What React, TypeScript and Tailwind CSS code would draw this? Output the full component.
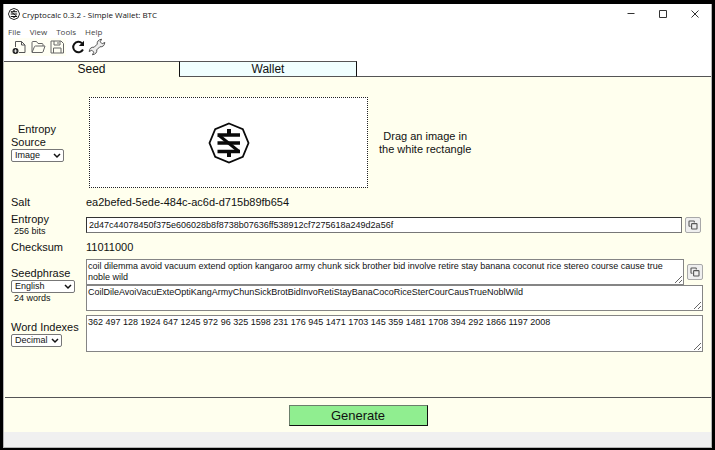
import React, { useState } from "react";

const SEED =
  "coil dilemma avoid vacuum extend option kangaroo army chunk sick brother bid involve retire stay banana coconut rice stereo course cause true noble wild";
const SHORT_SEED =
  "CoilDileAvoiVacuExteOptiKangArmyChunSickBrotBidInvoRetiStayBanaCocoRiceSterCourCausTrueNoblWild";
const INDEXES =
  "362 497 128 1924 647 1245 972 96 325 1598 231 176 945 1471 1703 145 359 1481 1708 394 292 1866 1197 2008";

function Logo({ className, ring }: { className: string; ring: number }) {
  return (
    <svg viewBox="0 0 42 42" className={className} fill="none" stroke="#0a0a0a" aria-hidden="true">
      <path d="M21 1.5 34.8 7.2 40.5 21 34.8 34.8 21 40.5 7.2 34.8 1.5 21 7.2 7.2Z" strokeWidth={ring} />
      <path d="M21 7v7M21 28v7" strokeWidth="4" />
      <path d="M9.5 13h22.5M9.5 21h22.5M9.5 29.5h22.5" strokeWidth="3.6" />
      <path d="M10.500 13 31 29.5" strokeWidth="3" />
    </svg>
  );
}

function CopyButton({ label }: { label: string }) {
  return (
    <button
      type="button"
      aria-label={label}
      className="grid size-4 shrink-0 place-items-center rounded-[2px] border border-[#a8a8a8] bg-[#efefef]"
    >
      <svg viewBox="0 0 10 10" className="size-[10px]" fill="none" stroke="#555" strokeWidth="1.1" aria-hidden="true">
        <path d="M2.5 6.3H1.6a.6.6 0 0 1-.6-.6V1.6A.6.6 0 0 1 1.6 1h4.1a.6.6 0 0 1 .6.6v1" />
        <rect x="3.6" y="3.6" width="5.4" height="5.4" rx="0.6" />
      </svg>
    </button>
  );
}

function Picker({ id, options, width }: { id: string; options: string[]; width: string }) {
  return (
    <div className={`relative ${width}`}>
      <select
        id={id}
        className="block h-[13px] w-full appearance-none rounded-[2px] border border-[#777] bg-white pl-[3px] text-[9px] leading-[11px] text-[#111]"
      >
        {options.map((o) => (
          <option key={o}>{o}</option>
        ))}
      </select>
      <svg
        viewBox="0 0 8 6"
        className="pointer-events-none absolute top-1 right-[3px] h-[6px] w-2"
        fill="none"
        stroke="#111"
        strokeWidth="1.5"
        aria-hidden="true"
      >
        <path d="M1 1l3 3 3-3" />
      </svg>
    </div>
  );
}

function Row({ label, children }: { label: React.ReactNode; children: React.ReactNode }) {
  return (
    <div className="flex items-center">
      <div className="w-[75px] shrink-0 whitespace-nowrap">{label}</div>
      <div className="min-w-0 flex-1">{children}</div>
    </div>
  );
}

const area =
  "block resize overflow-hidden border border-[#858585] bg-white px-[1px] py-[1px] text-[9px] leading-[11px] text-[#111]";

function Toolbar() {
  const btn = "grid h-[18px] w-[19px] place-items-center";
  return (
    <div className="flex h-[23px] items-start pl-[5px]">
      <button type="button" aria-label="New" className={`${btn} bg-[#fffff4]`}>
        <svg viewBox="0 0 16 16" className="size-4" fill="none" stroke="#555">
          <path d="M4.500 8V2.500h6M10.500 2.500v3.500H14v7.500H8M10.500 2.500l3.500 3.500" />
          <circle cx="4.500" cy="12" r="3" fill="#222" stroke="none" />
          <path d="M4.500 10.300v3.400M2.800 12h3.400" stroke="#fff" strokeWidth="0.8" />
        </svg>
      </button>
      <button type="button" aria-label="Open" className={`${btn} bg-[#fffff4]`}>
        <svg viewBox="0 0 16 16" className="size-4" fill="none" stroke="#666">
          <path d="M2 13V3.500q0-1 1-1h3.500l1.500 2h4q1 0 1 1V7M2 13.500l2.500-6q.2-.5 1-.5H15l-2 6q-.2.500-1 .5Z" />
        </svg>
      </button>
      <button type="button" aria-label="Save" className={`${btn} bg-[#fffff4]`}>
        <svg viewBox="0 0 16 16" className="size-4" fill="none" stroke="#666">
          <path d="M2 2h10l2.500 2.500V14H2ZM5 2v4h6V2M4.500 14V9h7.500v5M9 3v2" />
        </svg>
      </button>
      <button type="button" aria-label="Reload" className={`${btn} ml-[2px]`}>
        <svg viewBox="0 0 16 16" className="size-4" fill="none" stroke="#111" strokeWidth="2">
          <path d="M13 10.500A5.200 5.200 0 1 1 12 4.300" />
          <path d="M14 1.800v5.200H8.800Z" fill="#111" stroke="none" />
        </svg>
      </button>
      <button type="button" aria-label="Settings" className={btn}>
        <svg viewBox="0 0 18 18" className="size-[18px]" fill="#eee" stroke="#555">
          <path d="M9.200 6.200Q8.800 2 13.600 1.200L12.200 3.800 14.200 5.800 16.800 4.400Q16.400 9.200 11.800 8.800L8.800 11.800Q9.200 16 4.400 16.800L5.800 14.200 3.800 12.200 1.200 13.600Q1.600 8.800 6.200 9.200Z" />
        </svg>
      </button>
    </div>
  );
}

export default function App() {
  const [seed, setSeed] = useState(SEED);
  const [shortSeed, setShortSeed] = useState(SHORT_SEED);
  const [indexes, setIndexes] = useState(INDEXES);
  return (
    <div className="flex min-h-screen flex-col bg-black px-[3px] pt-1 pb-[2px] font-['Liberation_Sans',Arial,sans-serif] text-[11px] leading-[13px] text-[#111]">
      <div className="flex flex-1 flex-col border-x border-b border-[#b5b5b5] bg-[#ffffee]">
        <header className="bg-white font-['Open_Sans','Noto_Sans',sans-serif]">
          <div className="flex h-5 items-center pl-1">
            <Logo className="size-3" ring={3} />
            <h1 className="ml-[2px] flex-1 text-[8px]">Cryptocalc 0.3.2 - Simple Wallet: BTC</h1>
            <div className="flex">
              <button type="button" aria-label="Minimize" className="grid h-5 w-8 place-items-center">
                <svg viewBox="0 0 8 8" className="size-2" stroke="#333">
                  <path d="M0.500 3.500h7" />
                </svg>
              </button>
              <button type="button" aria-label="Maximize" className="grid h-5 w-8 place-items-center">
                <svg viewBox="0 0 8 8" className="size-2" fill="none" stroke="#333">
                  <path d="M.5.5h7v7h-7Z" />
                </svg>
              </button>
              <button type="button" aria-label="Close" className="grid h-5 w-8 place-items-center">
                <svg viewBox="0 0 8 8" className="size-2" stroke="#333">
                  <path d="M.5.5l7 7M7.500.5l-7 7" />
                </svg>
              </button>
            </div>
          </div>
          <nav className="flex h-[14px] items-center gap-[9px] pl-1 text-[8px] text-[#444]">
            <button type="button">File</button>
            <button type="button">View</button>
            <button type="button">Tools</button>
            <button type="button">Help</button>
          </nav>
          <Toolbar />
        </header>

        <div role="tablist" className="flex h-4 bg-white text-[12px]">
          <button type="button" role="tab" aria-selected="true" className="w-[175px] border-t border-[#555] bg-[#ffffee]">
            Seed
          </button>
          <button
            type="button"
            role="tab"
            aria-selected="false"
            className="w-[178px] border border-t-[#555] border-r-[#111] border-b-[#555] border-l-[#111] bg-[#f0ffff]"
          >
            Wallet
          </button>
          <div className="flex-1 border-b border-[#555]" />
        </div>

        <main className="flex flex-1 flex-col pt-5 pr-2 pl-[7px]">
          <Row
            label={
              <>
                <label htmlFor="source" className="block">
                  <span className="pl-[7px]">Entropy</span>
                  <br />
                  Source
                </label>
                <Picker id="source" options={["Image", "Text"]} width="w-[53px]" />
              </>
            }
          >
            <div className="flex items-center gap-[11px] pl-[3px]">
              <div className="grid h-[91px] w-[279px] place-items-center border border-dotted border-[#222] bg-white">
                <Logo className="size-[42px]" ring={1.8} />
              </div>
              <p className="text-center">
                Drag an image in
                <br />
                the white rectangle
              </p>
            </div>
          </Row>
          <div className="h-2" />
          <Row label="Salt">ea2befed-5ede-484c-ac6d-d715b89fb654</Row>
          <div className="h-1" />
          <Row
            label={
              <label htmlFor="entropy" className="block">
                Entropy
                <span className="block pl-[3px] text-[9px] leading-[11px]">256 bits</span>
              </label>
            }
          >
            <div className="flex items-center gap-[3px] pr-[2px]">
              <input
                id="entropy"
                defaultValue="2d47c44078450f375e606028b8f8738b07636ff538912cf7275618a249d2a56f"
                className="h-4 min-w-0 flex-1 border border-t-[#333] border-r-[#777] border-b-[#777] border-l-[#333] bg-white px-[2px] text-[9px]"
              />
              <CopyButton label="Copy entropy" />
            </div>
          </Row>
          <div className="h-1" />
          <Row label="Checksum">11011000</Row>
          <div className="h-[5px]" />
          <Row
            label={
              <>
                <label htmlFor="language" className="block">Seedphrase</label>
                <Picker id="language" options={["English", "French"]} width="w-16" />
                <span className="block pl-[3px] text-[9px] leading-[11px]">24 words</span>
              </>
            }
          >
            <div className="flex items-center gap-[3px]">
              <textarea
                aria-label="Seedphrase"
                value={seed}
                onChange={(e) => setSeed(e.target.value)}
                className={`${area} h-[26px] min-w-0 flex-1`}
              />
              <CopyButton label="Copy seedphrase" />
            </div>
            <textarea
              aria-label="Short seedphrase"
              value={shortSeed}
              onChange={(e) => setShortSeed(e.target.value)}
              className={`${area} h-[26px] w-full`}
            />
          </Row>
          <div className="h-1" />
          <Row
            label={
              <>
                <label htmlFor="base" className="block">Word Indexes</label>
                <Picker id="base" options={["Decimal", "Hexa"]} width="w-[51px]" />
              </>
            }
          >
            <textarea
              aria-label="Word indexes"
              value={indexes}
              onChange={(e) => setIndexes(e.target.value)}
              className={`${area} h-[37px] w-full`}
            />
          </Row>
        </main>

        <div className="ml-px flex h-[35px] items-center justify-center border-t border-[#555]">
          <button
            type="button"
            className="h-[21px] w-[139px] border border-t-[#6b7f6b] border-r-[#111] border-b-[#111] border-l-[#6b7f6b] bg-[#90ee90] text-[13px] leading-[15px]"
          >
            Generate
          </button>
        </div>
        <footer className="h-[15px] bg-[#f0f0f0]" />
      </div>
    </div>
  );
}
